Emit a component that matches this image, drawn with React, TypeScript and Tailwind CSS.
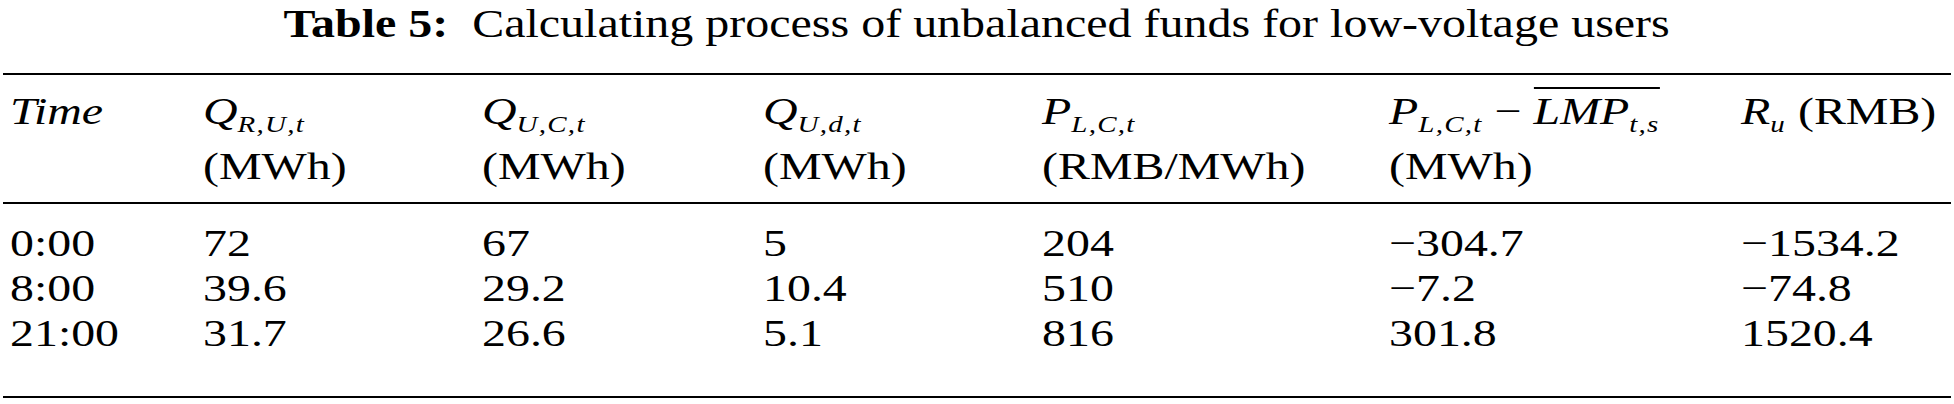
import React from "react";

function S({ children, className = "" }: { children: React.ReactNode; className?: string }) {
  return (
    <span className={`inline-block origin-left scale-x-[1.26] whitespace-nowrap ${className}`}>
      {children}
    </span>
  );
}

function V({ b, s }: { b: string; s: string }) {
  return (
    <span className="italic whitespace-nowrap">
      {b}
      <span className="relative top-[8px] text-[23px] tracking-[1px]">{s}</span>
    </span>
  );
}

const cols = "grid grid-cols-[200px_279px_281px_279px_347px_352px_1fr]";

const rows: string[][] = [
  ["0:00", "72", "67", "5", "204", "\u2212304.7", "\u22121534.2"],
  ["8:00", "39.6", "29.2", "10.4", "510", "\u22127.2", "\u221274.8"],
  ["21:00", "31.7", "26.6", "5.1", "816", "301.8", "1520.4"],
];

export default function App() {
  return (
    <div className="w-[1954px] h-[404px] bg-white text-black font-[family-name:'Liberation_Serif','Times_New_Roman',serif] text-[38px] leading-[45px]">
      <div className="h-[73px] pt-[2px] text-center text-[39px] leading-[44px] whitespace-nowrap">
        <span className="inline-block origin-center scale-x-[1.23]">
          <span className="font-bold">Table 5:</span>
          {"\u00a0 "}Calculating process of unbalanced funds for low-voltage users
        </span>
      </div>
      <div className="mx-[3px] border-t-2 border-black">
        <div className={`${cols} pt-[14px] pb-[13px]`}>
          <div className="pl-[7px]">
            <S className="italic">Time</S>
          </div>
          <div>
            <div className="h-[55px]"><S><V b="Q" s="R,U,t" /></S></div>
            <S>(MWh)</S>
          </div>
          <div>
            <div className="h-[55px]"><S><V b="Q" s="U,C,t" /></S></div>
            <S>(MWh)</S>
          </div>
          <div>
            <div className="h-[55px]"><S><V b="Q" s="U,d,t" /></S></div>
            <S>(MWh)</S>
          </div>
          <div>
            <div className="h-[55px]"><S><V b="P" s="L,C,t" /></S></div>
            <S>(RMB/MWh)</S>
          </div>
          <div>
            <div className="h-[55px]">
              <S>
                <V b="P" s="L,C,t" /> {"\u2212"}{" "}
                <span className="border-t-2 border-black pt-[1px]">
                  <V b="LMP" s="t,s" />
                </span>
              </S>
            </div>
            <S>(MWh)</S>
          </div>
          <div>
            <S>
              <V b="R" s="u" /> (RMB)
            </S>
          </div>
        </div>
      </div>
      <div className="mx-[3px] border-t-2 border-b-2 border-black pt-[17px] pb-[40px]">
        {rows.map((r, i) => (
          <div key={i} className={cols}>
            {r.map((c, j) => (
              <div key={j} className={j === 0 ? "pl-[7px]" : ""}>
                <S>{c}</S>
              </div>
            ))}
          </div>
        ))}
      </div>
    </div>
  );
}
